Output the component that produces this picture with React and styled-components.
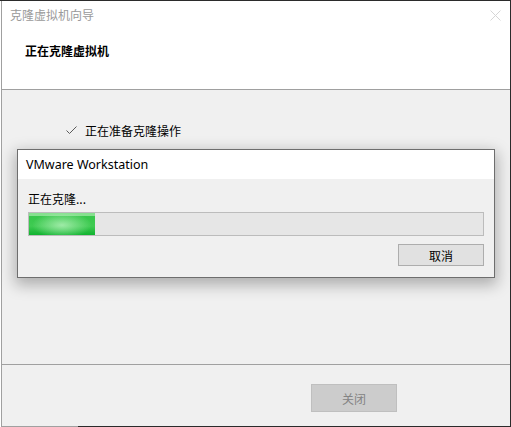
import React from "react";
import styled, { createGlobalStyle } from "styled-components";

const GlobalStyle = createGlobalStyle`
  html, body {
    margin: 0;
    padding: 0;
    background: #ffffff;
  }
  body {
    font-family: "Noto Sans CJK SC", "Noto Sans", sans-serif;
    font-size: 12px;
    color: #000;
  }
`;

const Frame = styled.div`
  position: relative;
  width: 511px;
  height: 427px;
  box-sizing: border-box;
  padding-left: 1px;
  border-top: 1px solid #2b2b2b;
  background: #ffffff;
  overflow: hidden;
  &::after {
    content: "";
    position: absolute;
    left: 78px;
    right: 0;
    bottom: 0;
    height: 1px;
    background: #2b2b2b;
  }
`;

const Window = styled.div`
  display: flex;
  flex-direction: column;
  height: 100%;
  box-sizing: border-box;
  border-left: 1px solid #a0a0a0;
  border-right: 1px solid #2b2b2b;
  border-bottom: 1px solid #a0a0a0;
  background: #f0f0f0;
`;

const Header = styled.div`
  height: 88px;
  background: #ffffff;
  border-bottom: 1px solid #a0a0a0;
  display: flex;
  flex-direction: column;
  flex-shrink: 0;
`;

const TitleBar = styled.div`
  display: flex;
  align-items: center;
  justify-content: space-between;
  height: 28px;
  padding: 0 9px 0 8px;
`;

const TitleText = styled.span`
  color: #9a9a9a;
  font-size: 12px;
  line-height: 14px;
`;

const Heading = styled.div`
  margin: 14px 0 0 23px;
  font-weight: bold;
  font-size: 12px;
  line-height: 16px;
`;

const Body = styled.div`
  flex: 1;
  position: relative;
  border-bottom: 1px solid #a0a0a0;
`;

const StepRow = styled.div`
  display: flex;
  align-items: center;
  gap: 8px;
  margin: 31px 0 0 64px;
  height: 18px;
  font-size: 12px;
`;

const Footer = styled.div`
  height: 61px;
  flex-shrink: 0;
  display: flex;
  align-items: flex-start;
  padding: 19px 0 0 309px;
  box-sizing: border-box;
`;

const Button = styled.button`
  width: ${(p) => p.$w}px;
  height: ${(p) => p.$h}px;
  box-sizing: border-box;
  border: 1px solid ${(p) => (p.$disabled ? "#bfbfbf" : "#adadad")};
  background: ${(p) => (p.$disabled ? "#cccccc" : "#e1e1e1")};
  color: ${(p) => (p.$disabled ? "#838383" : "#000000")};
  font-family: "Noto Sans CJK SC", sans-serif;
  font-size: 12px;
  padding: 0;
  margin: 0;
  display: flex;
  align-items: center;
  justify-content: center;
`;

const Dialog = styled.div`
  position: absolute;
  left: 15px;
  top: 59px;
  width: 478px;
  height: 129px;
  box-sizing: border-box;
  border: 1px solid #6e6e6e;
  background: #f0f0f0;
  box-shadow: 0 5px 14px 2px rgba(0, 0, 0, 0.28);
  display: flex;
  flex-direction: column;
`;

const DialogTitle = styled.div`
  height: 29px;
  background: #ffffff;
  display: flex;
  align-items: center;
  padding-left: 8px;
  font-family: "Noto Sans", "Liberation Sans", sans-serif;
  font-size: 12.5px;
  color: #000;
`;

const DialogBody = styled.div`
  display: flex;
  flex-direction: column;
  padding: 10px 10px 0 10px;
`;

const StatusText = styled.div`
  height: 20px;
  line-height: 20px;
  font-size: 12px;
`;

const Track = styled.div`
  margin-top: 3px;
  height: 24px;
  box-sizing: border-box;
  border: 1px solid #bcbcbc;
  background: #e6e6e6;
  position: relative;
  overflow: hidden;
`;

const Fill = styled.div`
  height: 100%;
  background:
    radial-gradient(ellipse 45% 60% at 50% 55%, rgba(190, 245, 195, 0.75), rgba(190, 245, 195, 0) 100%),
    linear-gradient(
      to bottom,
      #86e08f 0%,
      #86e08f 12%,
      #37c64b 16%,
      #3fcb52 60%,
      #22bb3c 85%,
      #10b32f 100%
    );
`;

const ButtonRow = styled.div`
  display: flex;
  justify-content: flex-end;
  margin-top: 8px;
  padding-right: 0px;
`;

const CloseIcon = () => (
  <svg width="11" height="11" viewBox="0 0 11 11">
    <path d="M0.5 0.5 L10.5 10.5 M10.5 0.5 L0.5 10.5" stroke="#d6d6d6" strokeWidth="1" />
  </svg>
);

const CheckIcon = () => (
  <svg width="11" height="9" viewBox="0 0 11 9">
    <path d="M0.5 4.5 L3.5 7.5 L10.5 0.5" stroke="#5a5a5a" strokeWidth="1" fill="none" />
  </svg>
);

export default function App() {
  const progress = 66;
  return (
    <>
      <GlobalStyle />
      <Frame>
        <Window>
          <Header>
            <TitleBar>
              <TitleText>克隆虚拟机向导</TitleText>
              <CloseIcon />
            </TitleBar>
            <Heading>正在克隆虚拟机</Heading>
          </Header>
          <Body>
            <StepRow>
              <CheckIcon />
              <span>正在准备克隆操作</span>
            </StepRow>
            <Dialog>
              <DialogTitle>VMware Workstation</DialogTitle>
              <DialogBody>
                <StatusText>正在克隆...</StatusText>
                <Track>
                  <Fill style={{ width: progress }} />
                </Track>
                <ButtonRow>
                  <Button $w={86} $h={22}>取消</Button>
                </ButtonRow>
              </DialogBody>
            </Dialog>
          </Body>
          <Footer>
            <Button $w={86} $h={28} $disabled>关闭</Button>
          </Footer>
        </Window>
      </Frame>
    </>
  );
}
